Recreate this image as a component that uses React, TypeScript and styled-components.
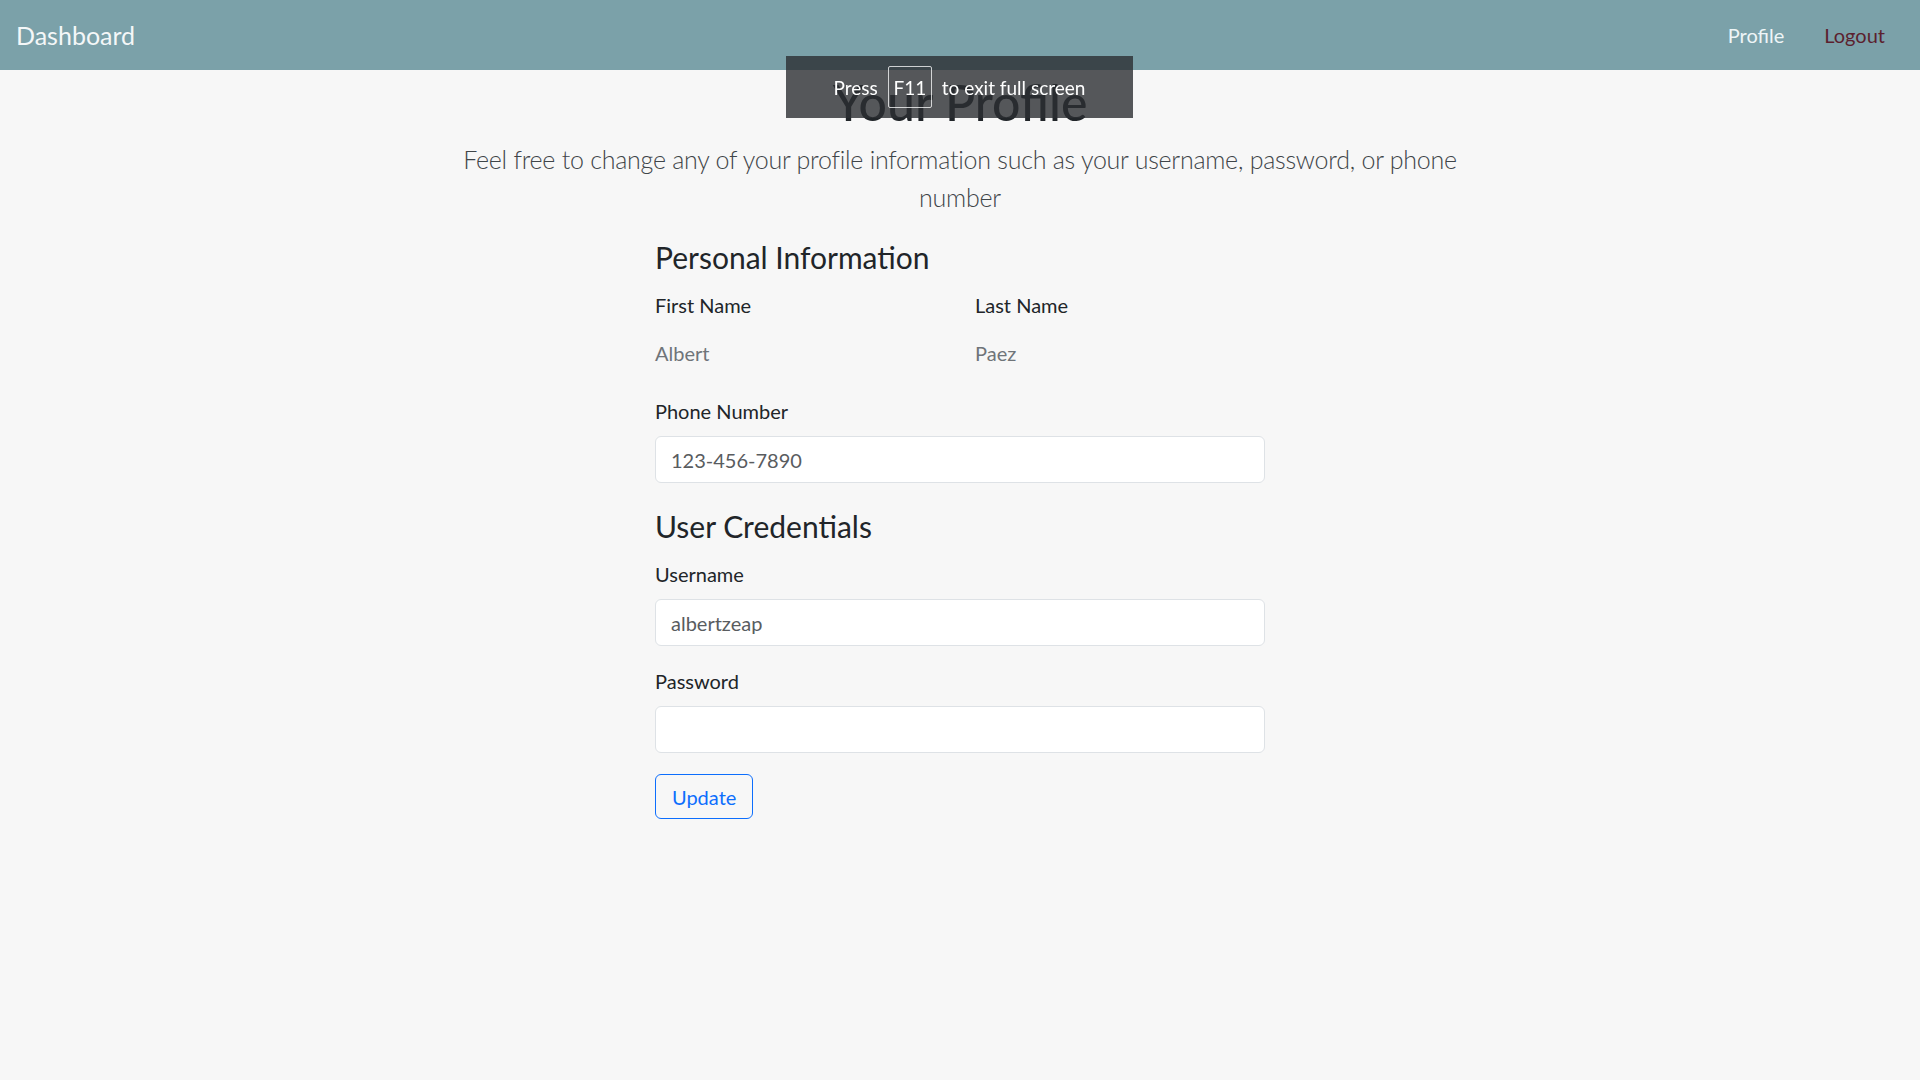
import React from "react";
import styled, { createGlobalStyle } from "styled-components";

const GlobalStyle = createGlobalStyle`
  html, body {
    margin: 0;
    padding: 0;
    background: #f7f7f7;
    font-family: "Segoe UI", Lato, "Liberation Sans", sans-serif;
    color: #212529;
  }
  * { box-sizing: border-box; }
`;

const NavBar = styled.nav`
  height: 70px;
  background: #7ba1a9;
  display: flex;
  align-items: center;
  justify-content: space-between;
  padding: 0 15px 0 16px;
`;

const Brand = styled.a`
  font-size: 25px;
  color: #f4f7f8;
  text-decoration: none;
  line-height: 1;
`;

const NavLinks = styled.div`
  display: flex;
  align-items: center;
`;

const NavLink = styled.a<{ $muted?: boolean }>`
  font-size: 20px;
  padding: 0 20px;
  text-decoration: none;
  color: ${(p) => (p.$muted ? "#5b1f2e" : "#eef5f7")};
`;

const Toast = styled.div`
  position: fixed;
  top: 56px;
  left: 786px;
  width: 347px;
  height: 62px;
  background: rgba(44, 46, 50, 0.8);
  display: flex;
  align-items: center;
  justify-content: center;
  gap: 10px;
  color: #ffffff;
  font-size: 19px;
  line-height: 1;
`;

const Key = styled.span`
  display: inline-flex;
  align-items: center;
  justify-content: center;
  width: 44px;
  height: 42px;
  border: 1px solid rgba(255, 255, 255, 0.75);
  border-radius: 2px;
`;

const Main = styled.main`
  display: flex;
  flex-direction: column;
  align-items: center;
  padding-top: 2px;
`;

const Title = styled.h1`
  margin: 0;
  font-size: 50px;
  font-weight: 500;
  line-height: 60px;
  text-align: center;
  color: #212529;
`;

const Lead = styled.p`
  margin: 9px 0 0;
  max-width: 1040px;
  font-size: 25px;
  font-weight: 300;
  line-height: 37.5px;
  letter-spacing: -0.25px;
  text-align: center;
  color: #3f4549;
`;

const Form = styled.form`
  width: 610px;
  margin-top: 23px;
  display: flex;
  flex-direction: column;
`;

const SectionTitle = styled.h3<{ $first?: boolean }>`
  margin: ${(p) => (p.$first ? "0" : "5px")} 0 15px;
  font-size: 30px;
  font-weight: 400;
  line-height: 36px;
  color: #212529;
`;

const Row = styled.div`
  display: grid;
  grid-template-columns: 1fr 1fr;
  column-gap: 30px;
`;

const Group = styled.div`
  display: flex;
  flex-direction: column;
  margin-bottom: 20px;
`;

const Label = styled.label`
  font-size: 20px;
  line-height: 30px;
  margin-bottom: 10px;
  color: #212529;
`;

const PlainText = styled.div`
  font-size: 20px;
  line-height: 30px;
  padding: 8px 0 8px;
  color: #6f7479;
`;

const Input = styled.input`
  width: 100%;
  height: 47px;
  font-family: inherit;
  font-size: 20px;
  line-height: 30px;
  padding: 7.5px 15px;
  border: 1px solid #dee2e6;
  border-radius: 6px;
  background: #ffffff;
  color: #595c5f;
  outline: none;
`;

const Button = styled.button`
  align-self: flex-start;
  margin-top: 1px;
  font-family: inherit;
  font-size: 20px;
  line-height: 30px;
  padding: 6.5px 16px;
  border: 1px solid #0d6efd;
  border-radius: 6px;
  background: transparent;
  color: #0d6efd;
  cursor: pointer;
`;

export default function App() {
  return (
    <>
      <GlobalStyle />
      <NavBar>
        <Brand href="#">Dashboard</Brand>
        <NavLinks>
          <NavLink href="#">Profile</NavLink>
          <NavLink href="#" $muted>
            Logout
          </NavLink>
        </NavLinks>
      </NavBar>
      <Main>
        <Title>Your Profile</Title>
        <Lead>
          Feel free to change any of your profile information such as your
          username, password, or phone number
        </Lead>
        <Form onSubmit={(e) => e.preventDefault()}>
          <SectionTitle $first>Personal Information</SectionTitle>
          <Row>
            <Group>
              <Label>First Name</Label>
              <PlainText>Albert</PlainText>
            </Group>
            <Group>
              <Label>Last Name</Label>
              <PlainText>Paez</PlainText>
            </Group>
          </Row>
          <Group>
            <Label>Phone Number</Label>
            <Input type="text" defaultValue="123-456-7890" />
          </Group>
          <SectionTitle>User Credentials</SectionTitle>
          <Group>
            <Label>Username</Label>
            <Input type="text" defaultValue="albertzeap" />
          </Group>
          <Group>
            <Label>Password</Label>
            <Input type="password" />
          </Group>
          <Button type="submit">Update</Button>
        </Form>
      </Main>
      <Toast>
        <span>Press</span>
        <Key>F11</Key>
        <span>to exit full screen</span>
      </Toast>
    </>
  );
}
